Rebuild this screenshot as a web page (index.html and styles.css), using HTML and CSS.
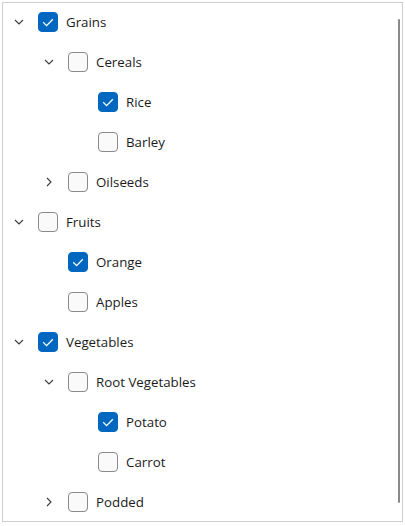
FILE: index.html
```html
<!DOCTYPE html>
<html>
<head>
<meta charset="utf-8">
<link rel="stylesheet" href="styles.css">
</head>
<body>
<div class="tree">
  <div class="rows">
  <div class="row l0"><span class="chev"><svg width="10" height="6" viewBox="0 0 10 6"><path d="M1 1 L5 5 L9 1" /></svg></span><span class="cb on"><svg width="20" height="20" viewBox="0 0 20 20"><path d="M5.2 10.3 L8.6 13.6 L14.8 7.2"/></svg></span><span class="lbl">Grains</span></div>
  <div class="row l1"><span class="chev"><svg width="10" height="6" viewBox="0 0 10 6"><path d="M1 1 L5 5 L9 1" /></svg></span><span class="cb"></span><span class="lbl">Cereals</span></div>
  <div class="row l2"><span class="chev"></span><span class="cb on"><svg width="20" height="20" viewBox="0 0 20 20"><path d="M5.2 10.3 L8.6 13.6 L14.8 7.2"/></svg></span><span class="lbl">Rice</span></div>
  <div class="row l2"><span class="chev"></span><span class="cb"></span><span class="lbl">Barley</span></div>
  <div class="row l1"><span class="chev"><svg width="6" height="10" viewBox="0 0 6 10"><path d="M1 1 L5 5 L1 9" /></svg></span><span class="cb"></span><span class="lbl">Oilseeds</span></div>
  <div class="row l0"><span class="chev"><svg width="10" height="6" viewBox="0 0 10 6"><path d="M1 1 L5 5 L9 1" /></svg></span><span class="cb"></span><span class="lbl">Fruits</span></div>
  <div class="row l1"><span class="chev"></span><span class="cb on"><svg width="20" height="20" viewBox="0 0 20 20"><path d="M5.2 10.3 L8.6 13.6 L14.8 7.2"/></svg></span><span class="lbl">Orange</span></div>
  <div class="row l1"><span class="chev"></span><span class="cb"></span><span class="lbl">Apples</span></div>
  <div class="row l0"><span class="chev"><svg width="10" height="6" viewBox="0 0 10 6"><path d="M1 1 L5 5 L9 1" /></svg></span><span class="cb on"><svg width="20" height="20" viewBox="0 0 20 20"><path d="M5.2 10.3 L8.6 13.6 L14.8 7.2"/></svg></span><span class="lbl">Vegetables</span></div>
  <div class="row l1"><span class="chev"><svg width="10" height="6" viewBox="0 0 10 6"><path d="M1 1 L5 5 L9 1" /></svg></span><span class="cb"></span><span class="lbl">Root Vegetables</span></div>
  <div class="row l2"><span class="chev"></span><span class="cb on"><svg width="20" height="20" viewBox="0 0 20 20"><path d="M5.2 10.3 L8.6 13.6 L14.8 7.2"/></svg></span><span class="lbl">Potato</span></div>
  <div class="row l2"><span class="chev"></span><span class="cb"></span><span class="lbl">Carrot</span></div>
  <div class="row l1"><span class="chev"><svg width="6" height="10" viewBox="0 0 6 10"><path d="M1 1 L5 5 L1 9" /></svg></span><span class="cb"></span><span class="lbl">Podded</span></div>
  </div>
  <div class="scrollbar"></div>
</div>
</body>
</html>
```
FILE: styles.css
```css
html, body {
  margin: 0;
  padding: 0;
  background: #ffffff;
}
body {
  font-family: "Segoe UI", "Open Sans", "Noto Sans", sans-serif;
  font-size: 13.3px;
  color: #1b1b1b;
}
.tree {
  position: relative;
  box-sizing: border-box;
  margin: 2px;
  width: 401px;
  height: 520px;
  border: 1px solid #cfcfcf;
}
.rows {
  margin-top: -1px;
}
.row {
  display: flex;
  align-items: center;
  height: 40px;
  box-sizing: border-box;
  padding-left: 1px;
}
.row.l1 { padding-left: 31px; }
.row.l2 { padding-left: 61px; }
.chev {
  width: 30px;
  height: 20px;
  display: flex;
  align-items: center;
  justify-content: center;
  flex: none;
}
.chev svg path {
  fill: none;
  stroke: #3a3a3a;
  stroke-width: 1.1;
}
.cb {
  box-sizing: border-box;
  width: 20px;
  height: 20px;
  margin-left: 4px;
  border: 1px solid #8a8a8a;
  border-radius: 4px;
  background: #fafafa;
  flex: none;
  position: relative;
}
.cb.on {
  background: #0067c0;
  border-color: #0067c0;
}
.cb svg {
  position: absolute;
  left: -1px;
  top: -1px;
}
.cb svg path {
  fill: none;
  stroke: #ffffff;
  stroke-width: 1.3;
}
.lbl {
  margin-left: 8px;
  white-space: nowrap;
}
.scrollbar {
  position: absolute;
  right: 2px;
  top: 16px;
  width: 2px;
  height: 484px;
  background: #8a8a8a;
  border-radius: 1px;
}
```
